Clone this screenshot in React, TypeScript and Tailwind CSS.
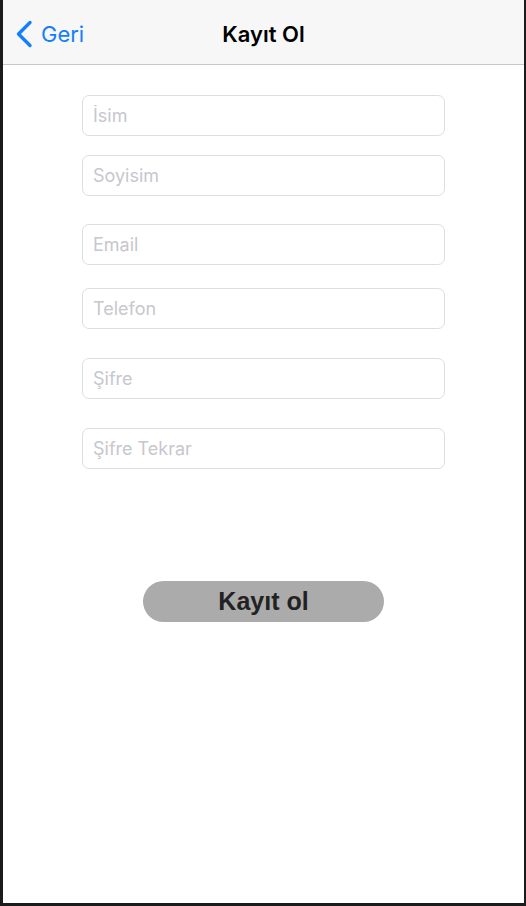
import React from "react";

const fields = [
  { label: "İsim", mt: "mt-[30px]" },
  { label: "Soyisim", mt: "mt-[19px]" },
  { label: "Email", mt: "mt-[28px]" },
  { label: "Telefon", mt: "mt-[23px]" },
  { label: "Şifre", mt: "mt-[29px]" },
  { label: "Şifre Tekrar", mt: "mt-[29px]" },
];

const BackChevron = () => (
  <svg width="18" height="28" viewBox="0 0 18 28" fill="none">
    <path
      d="M15 2.5 L3.5 14 L15 25.5"
      stroke="#157efb"
      strokeWidth="3.4"
      strokeLinecap="round"
      strokeLinejoin="round"
    />
  </svg>
);

const App = () => {
  return (
    <div className="w-[526px] h-[906px] bg-[#1b1b1b] pl-[3px] pr-[2px] pb-[3px] font-['Inter',sans-serif]">
      <div className="h-full bg-white flex flex-col">
        {/* nav bar */}
        <div className="relative h-[65px] bg-[#f7f7f7] border-b border-[#c8c8c8] flex items-center">
          <div className="flex items-center pl-[12px] pt-[3px] gap-[8px]">
            <BackChevron />
            <span className="text-[22px] text-[#157efb] leading-none">Geri</span>
          </div>
          <div className="absolute inset-x-0 top-0 h-full flex items-center justify-center pt-[3px] pointer-events-none">
            <span className="text-[22px] font-semibold text-black leading-none">Kayıt Ol</span>
          </div>
        </div>

        {/* form */}
        <div className="flex flex-col items-center">
          {fields.map((f) => (
            <input
              key={f.label}
              placeholder={f.label}
              className={
                f.mt +
                " w-[363px] h-[41px] rounded-[7px] border border-[#dedede] px-[10px] text-[18px] text-black placeholder:text-[#c7c7cd] outline-none"
              }
            />
          ))}

          <button className="mt-[112px] w-[241px] h-[41px] rounded-full bg-[#ababab] text-[25px] font-bold text-[#222222] font-['Liberation_Sans',Arial,sans-serif] leading-none">
            Kayıt ol
          </button>
        </div>
      </div>
    </div>
  );
};

export default App;
